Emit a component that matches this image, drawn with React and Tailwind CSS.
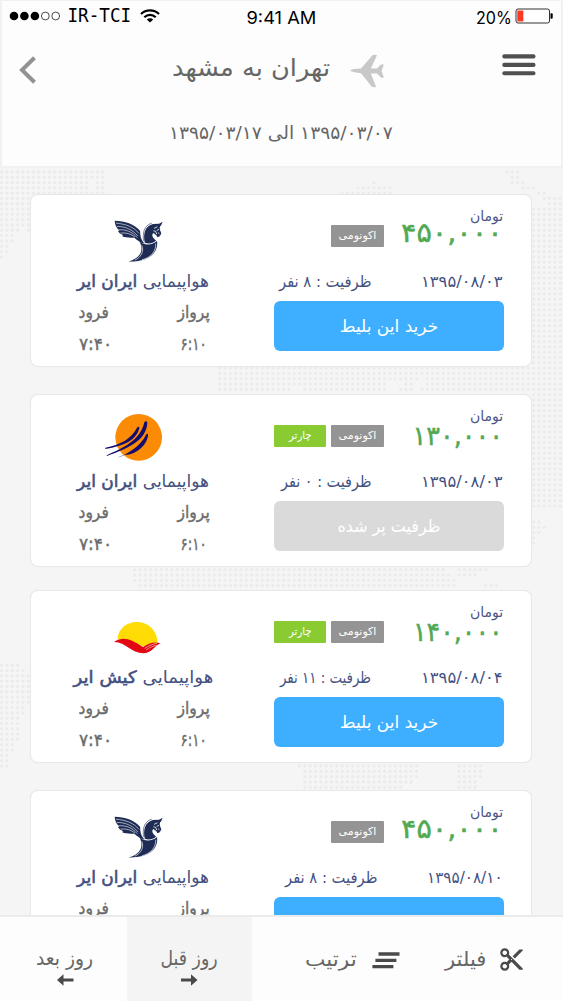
import { useLayoutEffect, useRef } from "react";
import { MdContentCut } from "react-icons/md";

// Single line of text, condensed or widened to the width of its box.
function Fit({ className = "", children }) {
  const box = useRef(null);
  const line = useRef(null);
  useLayoutEffect(() => {
    const ratio = box.current.clientWidth / line.current.offsetWidth;
    line.current.style.transform = `scaleX(${ratio})`;
  }, []);
  return (
    <span ref={box} className={"flex shrink-0 items-center justify-center whitespace-nowrap " + className}>
      <span ref={line} className="block shrink-0 origin-center">
        {children}
      </span>
    </span>
  );
}

// Runs of dots on the map backdrop: [row, first column, last column]
const runs = [
  [0, 0, 19], [1, 0, 19], [2, 0, 16], [2, 18, 19], [3, 0, 16], [3, 18, 19], [4, 0, 19],
  [5, 0, 5], [6, 0, 5], [7, 0, 5], [8, 0, 5], [9, 0, 5], [10, 0, 5], [11, 0, 3], [11, 5, 5],
  [12, 0, 2], [13, 0, 2], [14, 0, 1], [15, 0, 1], [16, 0, 0],
  [2, 70, 70], [3, 67, 73], [4, 64, 73],
  [0, 95, 97], [1, 96, 97], [2, 96, 98], [3, 98, 100], [4, 101, 102], [5, 102, 105], [6, 103, 105],
  ...Array.from({ length: 57 }, (_, i) => [7 + i, 100, 105]),
  [66, 100, 101], [67, 100, 102], [68, 100, 101], [69, 100, 100], [70, 100, 100],
  [37, 41, 99], [38, 41, 99], [39, 41, 78], [39, 80, 99], [40, 41, 72], [40, 76, 77], [40, 80, 99],
  [41, 41, 54], [41, 57, 72], [41, 75, 77], [41, 79, 99],
  [75, 25, 83], [75, 86, 91], [76, 25, 84], [76, 86, 89], [77, 25, 85], [78, 26, 85], [78, 91, 93],
  [112, 56, 78], [113, 57, 78], [114, 57, 78], [115, 57, 77], [116, 57, 75],
  [112, 86, 90], [113, 86, 90], [114, 86, 90], [115, 86, 89], [116, 86, 89],
  [93, 0, 3], [94, 0, 4], [95, 0, 5], [96, 0, 5], [97, 0, 5], [98, 0, 5], [99, 0, 5], [100, 0, 5],
  [101, 0, 4], [102, 0, 4], [103, 0, 3], [104, 0, 3], [105, 0, 3], [106, 0, 3], [107, 0, 3],
  [108, 0, 2], [109, 0, 2], [110, 0, 1], [111, 0, 1], [112, 0, 1],
];

function DotMap() {
  const d = runs
    .flatMap(([r, a, b]) =>
      Array.from({ length: b - a + 1 }, (_, i) => `M${(1.6 + 5.32 * (a + i)).toFixed(1)} ${(3.9 + 5.304 * r).toFixed(1)}h0`)
    )
    .join("");
  return (
    <svg className="absolute inset-0 h-full w-full" viewBox="0 0 563 747" preserveAspectRatio="xMinYMin slice">
      <path d={d} stroke="#ebebed" strokeWidth="3.2" strokeLinecap="round" />
    </svg>
  );
}

function HomaLogo() {
  return (
    <svg className="h-[42px] w-[49px]" viewBox="280 118 148 126" fill="#1e2c55">
      <path d="M282 120C312 121 342 129 359 151C359 166 361 178 373 189C357 186 350 177 341 171C329 172 313 171 305 167L307 163C300 161 295 157 292 151L296 149C287 142 283 133 282 120Z" />
      <g fill="none" stroke="#fff" strokeWidth="1.8">
        <path d="M286 127C315 130 340 138 355 158" />
        <path d="M289 137C313 137 335 145 352 166" />
        <path d="M294 147C315 146 335 152 350 171" />
        <path d="M300 157C318 155 332 160 343 169" />
      </g>
      <path d="M373 186C367 160 374 135 398 130L416 129L427 123L422 134C417 137 418 142 419 148L423 158L418 167L411 170L408 164L399 157C392 163 397 172 407 180C396 189 384 190 373 186Z" />
      <path d="M370 181C365 158 371 134 394 127" fill="none" stroke="#1e2c55" strokeWidth="1.8" />
      <path d="M401 143l10-5M399 150l7 2 3 8M409 149l7-3M413 156l4 3" stroke="#fff" strokeWidth="2.4" fill="none" />
      <path d="M357 182C372 197 397 193 410 181C415 214 389 245 324 243C352 235 374 216 357 182Z" />
      <path d="M364 194C372 214 360 231 343 239M406 189C407 213 391 231 364 238" fill="none" stroke="#fff" strokeWidth="2" />
    </svg>
  );
}

function AsemanLogo() {
  return (
    <svg className="h-[47px] w-[57px]" viewBox="254 71 171 141">
      <circle cx="355" cy="141" r="70" fill="#fb8a04" />
      <g fill="#150d6e">
        <path d="M255 172C300 163 332 146 350 112C353 108 358 109 357 114C348 150 312 167 255 176Z" />
        <path d="M259 195C310 172 360 150 372 96C375 91 381 93 381 98C378 152 320 175 260 197Z" />
        <path d="M290 202C325 190 362 165 377 133C380 129 384 130 383 136C378 172 335 196 314 193C306 197 298 200 290 202Z" />
      </g>
    </svg>
  );
}

function KishLogo() {
  return (
    <svg className="h-[33px] w-[47px]" viewBox="341 91 141 99">
      <path d="M351 147C355 76 467 73 472 156C455 156 440 165 428 167C404 160 382 141 351 147Z" fill="#ffdc05" />
      <path d="M341 154C370 135 392 147 428 169C445 158 460 151 481 158C462 165 457 186 430 188C392 187 378 155 341 154Z" fill="#e30613" />
      <path d="M433 173C446 165 457 160 470 158M437 178C448 170 458 166 469 164" fill="none" stroke="#fff" strokeWidth="1.6" />
    </svg>
  );
}

const flights = [
  { price: "۴۵۰,۰۰۰", priceW: "w-[102px] mt-[-8px]", date: "۱۳۹۵/۰۸/۰۳", dateW: "w-[82px]", seats: "ظرفیت : ۸ نفر", seatsW: "w-[92px] mr-[50px]", airline: "ایران ایر", nameW: "w-[132px]", Logo: HomaLogo, logoBox: "pt-[25px] pr-[10px]", gap: "mt-[26px]" },
  { price: "۱۳۰,۰۰۰", priceW: "w-[91px] mt-[-5px]", date: "۱۳۹۵/۰۸/۰۳", dateW: "w-[82px]", seats: "ظرفیت : ۰ نفر", seatsW: "w-[90px] mr-[50px]", airline: "ایران ایر", nameW: "w-[132px]", Logo: AsemanLogo, logoBox: "pt-[19px] pr-[19px]", charter: true, full: true, gap: "mt-[27px]" },
  { price: "۱۴۰,۰۰۰", priceW: "w-[90px] mt-[-5px]", date: "۱۳۹۵/۰۸/۰۴", dateW: "w-[82px]", seats: "ظرفیت : ۱۱ نفر", seatsW: "w-[91px] mr-[50px]", airline: "کیش ایر", nameW: "w-[140px]", Logo: KishLogo, logoBox: "pt-[30px] pr-[11px]", charter: true, gap: "mt-[23px]" },
  { price: "۴۵۰,۰۰۰", priceW: "w-[102px] mt-[-8px]", date: "۱۳۹۵/۰۸/۱۰", dateW: "w-[76px]", seats: "ظرفیت : ۸ نفر", seatsW: "w-[92px] mr-[50px]", airline: "ایران ایر", nameW: "w-[132px]", Logo: HomaLogo, logoBox: "pt-[25px] pr-[10px]", gap: "mt-[27px]" },
];

function FlightCard({ f }) {
  const { Logo } = f;
  return (
    <article className={"mr-[31px] ml-[30px] flex h-[173px] shrink-0 rounded-lg border border-[#e8e8e8] bg-white pr-[27px] shadow-[0_0_1px_#e8e8e8] " + f.gap}>
      <section className="flex w-[230px] flex-col">
        <div className="flex h-[73px]">
          <div className="flex flex-col items-start pt-[11px] pr-[1px]">
            <Fit className="h-[20px] w-[33px] text-[14px] text-[#4a5585]">تومان</Fit>
            <Fit className={"h-[30px] text-[27px] text-[#51a954] [-webkit-text-stroke:0.5px] " + f.priceW}>{f.price}</Fit>
          </div>
          <div className="mr-auto flex w-[110px] gap-[5px] pt-[30px] text-[11px] text-white">
            <div className="flex h-[22px] w-[53px] items-center justify-center rounded-[1px] bg-[#949494]">
              <Fit className="w-[38px]">اکونومی</Fit>
            </div>
            {f.charter && (
              <div className="flex h-[22px] w-[52px] items-center justify-center rounded-[1px] bg-[#89cb31]">
                <Fit className="w-[23px]">چارتر</Fit>
              </div>
            )}
          </div>
        </div>
        <div className="mb-[5px] flex h-[28px] items-center pr-[1px] text-[16px] text-[#43507f]">
          <Fit className={f.dateW}>{f.date}</Fit>
          <Fit className={f.seatsW}>{f.seats}</Fit>
        </div>
        <button className={"flex h-[50px] items-center justify-center rounded-md text-[17px] text-white " + (f.full ? "bg-[#dadada]" : "bg-[#3eafff]")}>
          {f.full ? <Fit className="mt-[2px] w-[103px]">ظرفیت پر شده</Fit> : <Fit className="mt-[1px] w-[98px]">خرید این بلیط</Fit>}
        </button>
      </section>
      <section className="mr-[60px] flex w-[142px] flex-col items-center">
        <div className={"flex h-[74px] shrink-0 items-start justify-center " + f.logoBox}>
          <Logo />
        </div>
        <Fit className={"h-[26px] text-[17px] text-[#43507f] " + f.nameW}>
          هواپیمایی <b className="font-normal [-webkit-text-stroke:0.6px]">{f.airline}</b>
        </Fit>
        <div className="flex w-full flex-col pr-[4px] pl-[7px] text-[17px] text-[#6b6b6b] [-webkit-text-stroke:0.4px]">
          <div className="flex h-[35px] items-center justify-between">
            <Fit className="w-[32px]">پرواز</Fit>
            <Fit className="w-[30px]">فرود</Fit>
          </div>
          <div className="flex h-[30px] items-center justify-between pr-[3px]">
            <Fit className="w-[26px]">۶:۱۰</Fit>
            <Fit className="w-[33px]">۷:۴۰</Fit>
          </div>
        </div>
      </section>
    </article>
  );
}

function StatusBar() {
  return (
    <div dir="ltr" className="flex h-[34px] items-center justify-between pr-[8px] pl-[7px] text-black">
      <div className="mb-[5px] flex w-[152px] items-center">
        <svg className="mr-[7px] h-[10px] w-[51px]" viewBox="0 0 51 10">
          <circle cx="5" cy="5" r="4.3" />
          <circle cx="15.4" cy="5" r="4.3" />
          <circle cx="25.9" cy="5" r="4.3" />
          <circle cx="36.3" cy="5" r="3.9" fill="none" stroke="#000" strokeWidth=".7" />
          <circle cx="46.7" cy="5" r="3.9" fill="none" stroke="#000" strokeWidth=".7" />
        </svg>
        <Fit className="w-[64px] font-['DejaVu_Sans_Mono',monospace] text-[19px]">IR-TCI</Fit>
        <svg className="ml-[9px] h-[14px] w-[20px]" viewBox="0 0 20 14" fill="none" stroke="#000" strokeWidth="2.2">
          <path d="M1 5C6 .2 14 .2 19 5M4.3 8.2C7.6 5.2 12.4 5.2 15.7 8.2" />
          <path d="M6.8 10.4C8.8 8.8 11.2 8.8 13.2 10.4L10 13.4Z" fill="#000" stroke="none" />
        </svg>
      </div>
      <Fit className="mt-[2px] w-[70px] font-['Inter',sans-serif] text-[17px]">9:41 AM</Fit>
      <div className="flex w-[152px] items-center justify-end">
        <Fit className="mt-[2px] mr-[3px] w-[36px] font-['Inter',sans-serif] text-[17px]">20%</Fit>
        <svg className="mb-[4px] h-[16px] w-[38px]" viewBox="0 0 38 16">
          <rect x="1" y="1" width="33.5" height="14" rx="2" fill="#fff" stroke="#333" />
          <rect x="2.3" y="2.5" width="6" height="11" fill="#ff3826" />
          <path d="M35.5 5.3h1.2q1 0 1 1v3.4q0 1-1 1h-1.2z" />
        </svg>
      </div>
    </div>
  );
}

export default function App() {
  return (
    <div dir="rtl" className="flex h-[1001px] w-[563px] flex-col overflow-hidden bg-[#f5f5f5] font-['DejaVu_Sans','Noto_Sans',sans-serif]">
      <header className="h-[168px] shrink-0 border-2 border-[#f1f1f1] border-t bg-[#fdfdfd]">
        <StatusBar />
        <div className="flex h-[70px] items-center">
          <svg className="mr-[25px] mb-[10px] h-[22px] w-[34px]" viewBox="0 0 34 22" stroke="#505050" strokeWidth="4.1" strokeLinecap="round">
            <path d="M2.3 2.4h29.2M2.3 10.9h29.2M2.3 19.2h29.2" />
          </svg>
          <svg className="mr-[118px] mt-[1px] h-[34px] w-[34px]" viewBox="0 0 34 34" fill="#c8c8c8">
            <path d="M0 16.5C2 15 6 14.7 11 14.500L22.5 1.200Q24.5.200 27 1.300L20.8 14.500H27L31 10.500Q32.500 9.800 33.800 10.700L31.500 17L33.800 23.300Q32.500 24.200 31 23.500L27 19.500H20.800L26 32.700Q24 33.800 21.800 32.800L11 19.200C6 18.800 2 18 0 16.500Z" />
          </svg>
          <Fit className="mr-[20px] mb-[4px] w-[158px] text-[24px] text-[#666]">تهران به مشهد</Fit>
          <svg className="mr-auto ml-[17px] h-[28px] w-[18px]" viewBox="0 0 18 28" fill="none" stroke="#929292" strokeWidth="4">
            <path d="M15.5 1.8L3 14L15.5 26.2" />
          </svg>
        </div>
        <div className="flex h-[54px] items-center justify-center pr-[2px]">
          <Fit className="w-[224px] text-[18px] text-[#666]">۱۳۹۵/۰۳/۰۷ الی ۱۳۹۵/۰۳/۱۷</Fit>
        </div>
      </header>

      <main className="relative min-h-0 flex-1 overflow-hidden">
        <DotMap />
        <div className="relative flex h-full flex-col overflow-hidden">
          {flights.map((f, i) => (
            <FlightCard key={i} f={f} />
          ))}
        </div>
      </main>

      <nav className="flex h-[86px] shrink-0 border-t-2 border-[#ebebeb] bg-[#fdfdfd] text-[20px] text-[#666]">
        <div className="flex w-[155px] items-center pr-[38px]">
          <MdContentCut className="mt-[1px] text-[27px] text-[#4a4a4a]" />
          <Fit className="mr-[12px] w-[41px]">فیلتر</Fit>
        </div>
        <div className="flex flex-1 items-center pr-[8px]">
          <svg className="mt-[3px] h-[17px] w-[28px]" viewBox="0 0 28 17" stroke="#4a4a4a" strokeWidth="3.3">
            <path d="M6.5 2h21M3.4 8.3h21M.4 14.6h21" />
          </svg>
          <Fit className="mr-[15px] w-[52px]">ترتیب</Fit>
        </div>
        <div className="flex w-[125px] flex-col items-center bg-[#f4f4f4] pt-[24px]">
          <Fit className="h-[33px] w-[57px]">روز قبل</Fit>
          <svg className="h-[12px] w-[17px]" viewBox="0 0 17 12" fill="#4a4a4a">
            <path d="M0 4.5h10V.3L16.5 6L10 11.7V7.5H0z" />
          </svg>
        </div>
        <div className="flex w-[127px] flex-col items-center pt-[24px] pl-[3px]">
          <Fit className="h-[33px] w-[57px]">روز بعد</Fit>
          <svg className="h-[12px] w-[17px]" viewBox="0 0 17 12" fill="#4a4a4a">
            <path d="M16.5 4.5h-10V.3L0 6L6.5 11.7V7.5H16.5z" />
          </svg>
        </div>
      </nav>
    </div>
  );
}
